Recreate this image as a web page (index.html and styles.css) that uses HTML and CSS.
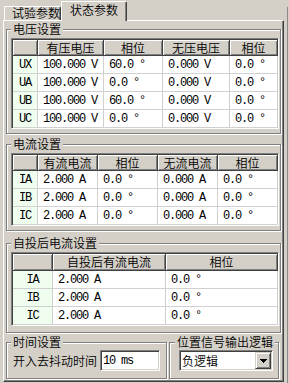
FILE: index.html
```html
<!DOCTYPE html>
<html lang="zh">
<head>
<meta charset="utf-8">
<title>状态参数</title>
<link rel="stylesheet" href="styles.css">
</head>
<body>
<div class="tabs">
  <div class="tab">试验参数</div>
  <div class="tab active">状态参数</div>
</div>
<div class="page">
  <div class="group g1">
    <div class="gtitle">电压设置</div>
    <div class="grid v">
      <div class="h"></div><div class="h">有压电压</div><div class="h">相位</div><div class="h">无压电压</div><div class="h">相位</div>
      <div class="r">UX</div><div class="d">100.000 V</div><div class="d">60.0 °</div><div class="d">0.000 V</div><div class="d">0.0 °</div>
      <div class="r">UA</div><div class="d">100.000 V</div><div class="d">0.0 °</div><div class="d">0.000 V</div><div class="d">0.0 °</div>
      <div class="r">UB</div><div class="d">100.000 V</div><div class="d">60.0 °</div><div class="d">0.000 V</div><div class="d">0.0 °</div>
      <div class="r">UC</div><div class="d">100.000 V</div><div class="d">0.0 °</div><div class="d">0.000 V</div><div class="d">0.0 °</div>
    </div>
  </div>
  <div class="group g2">
    <div class="gtitle">电流设置</div>
    <div class="grid c">
      <div class="h"></div><div class="h">有流电流</div><div class="h">相位</div><div class="h">无流电流</div><div class="h">相位</div>
      <div class="r">IA</div><div class="d">2.000 A</div><div class="d">0.0 °</div><div class="d">0.000 A</div><div class="d">0.0 °</div>
      <div class="r">IB</div><div class="d">2.000 A</div><div class="d">0.0 °</div><div class="d">0.000 A</div><div class="d">0.0 °</div>
      <div class="r">IC</div><div class="d">2.000 A</div><div class="d">0.0 °</div><div class="d">0.000 A</div><div class="d">0.0 °</div>
    </div>
  </div>
  <div class="group g3">
    <div class="gtitle">自投后电流设置</div>
    <div class="grid z">
      <div class="h"></div><div class="h">自投后有流电流</div><div class="h">相位</div>
      <div class="r">IA</div><div class="d">2.000 A</div><div class="d">0.0 °</div>
      <div class="r">IB</div><div class="d">2.000 A</div><div class="d">0.0 °</div>
      <div class="r">IC</div><div class="d">2.000 A</div><div class="d">0.0 °</div>
    </div>
  </div>
  <div class="bottom">
    <div class="group g4">
      <div class="gtitle">时间设置</div>
      <div class="field">
        <span class="flabel">开入去抖动时间</span>
        <div class="edit">10 ms</div>
      </div>
    </div>
    <div class="group g5">
      <div class="gtitle">位置信号输出逻辑</div>
      <div class="combo">
        <span>负逻辑</span>
        <div class="dbtn"><svg width="7" height="4" viewBox="0 0 7 4"><polygon points="0,0 7,0 3.5,4" fill="#000"/></svg></div>
      </div>
    </div>
  </div>
</div>
</body>
</html>
```
FILE: styles.css
```css
* { box-sizing: border-box; margin: 0; padding: 0; }
html, body { width: 289px; height: 383px; overflow: hidden; }
body {
  background: #d4d0c8 linear-gradient(#8a8a8a, #8a8a8a) no-repeat 287px 7px / 1px 376px;
  font: 350 12px/12px "Noto Sans CJK SC", sans-serif;
  color: #000;
}
.tabs {
  display: flex;
  align-items: flex-end;
  height: 21px;
  margin-bottom: -1px;
  padding-left: 4px;
  position: relative;
  z-index: 1;
}
.tab {
  height: 14px;
  width: 57px;
  padding-left: 7px;
  border-left: 1px solid #fff;
  border-top: 1px solid #fff;
  border-right: 1px solid #404040;
  box-shadow: inset -1px 0 #808080;
  border-radius: 2px 2px 0 0;
  margin-bottom: 1px;
  background: #d4d0c8;
}
.tab.active {
  height: 20px;
  width: 66px;
  padding-top: 2px;
  padding-left: 8px;
  margin-bottom: 0;
}
.page {
  margin-left: 3px;
  width: 281px;
  height: 362px;
  border-left: 1px solid #fff;
  border-top: 1px solid #fff;
  border-right: 1px solid #404040;
  border-bottom: 1px solid #404040;
  box-shadow: inset -1px -1px #808080;
  padding-left: 2px;
}
.group {
  border: 1px solid #808080;
  box-shadow: inset 1px 1px #fff, 1px 1px #fff;
}
.gtitle {
  width: max-content;
  height: 12px;
  padding: 0 2px;
  background: #d4d0c8;
  margin: -7px 0 3px 0;
}
.g1, .g2, .g3 { width: 275px; padding: 0 1px 4px 4px; }
.g1 { margin-top: 8px; }
.g2 { margin-top: 10px; }
.g3 { margin-top: 12px; padding-bottom: 6px; }
.bottom { display: flex; gap: 2px; margin-top: 9px; }
.g4 { width: 161px; padding: 0 0 7px 6px; }
.g4 .gtitle { margin-left: -2px; margin-bottom: 2px; }
.g5 { width: 110px; padding: 0 5px 7px 9px; }
.g5 .gtitle { margin-left: -4px; margin-bottom: 2px; }

.grid {
  display: grid;
  border: 1px solid;
  border-color: #808080 #fff #fff #808080;
  box-shadow: inset 1px 1px #404040;
  padding: 1px 0 0 1px;
  background: #fff;
}
.v { grid-template-columns: 25px 66px 59px 67px 48px; grid-template-rows: 16px repeat(4, 18px); }
.c { grid-template-columns: 25px repeat(4, 60px); grid-template-rows: 16px repeat(3, 18px); }
.z { grid-template-columns: 40px 113px 112px; grid-template-rows: 17px repeat(3, 18px); }
.h {
  background: #d4d0c8;
  border-right: 1px solid #404040;
  border-bottom: 1px solid #404040;
  box-shadow: inset 1px 1px #fff, inset -1px -1px #808080;
  display: flex;
  align-items: center;
  justify-content: center;
}
.r, .d, .edit {
  font-family: "Liberation Mono", monospace;
  font-weight: 400;
  letter-spacing: -1.2px;
}
.r {
  background: #effeef;
  border-right: 1px solid #d0d0d0;
  border-bottom: 1px solid #d0d0d0;
  display: flex;
  align-items: center;
  justify-content: center;
}
.d {
  border-right: 1px solid #d0d0d0;
  border-bottom: 1px solid #d0d0d0;
  display: flex;
  align-items: center;
  padding-left: 5px;
  white-space: pre;
}
.field { display: flex; align-items: center; gap: 3px; }
.flabel { width: 84px; white-space: nowrap; }
.edit, .combo {
  height: 21px;
  border: 1px solid;
  border-color: #808080 #fff #fff #808080;
  box-shadow: inset 1px 1px #404040, inset -1px -1px #d4d0c8;
  background: #fff;
  display: flex;
  align-items: center;
}
.edit { width: 60px; padding-left: 2px; }
.combo { width: 94px; padding: 0 1px 0 2px; justify-content: space-between; }
.dbtn {
  width: 16px;
  height: 17px;
  background: #d4d0c8;
  border: 1px solid;
  border-color: #d4d0c8 #404040 #404040 #d4d0c8;
  box-shadow: inset 1px 1px #fff, inset -1px -1px #808080;
  display: flex;
  align-items: center;
  justify-content: center;
}
.dbtn svg { display: block; shape-rendering: crispEdges; }
```
